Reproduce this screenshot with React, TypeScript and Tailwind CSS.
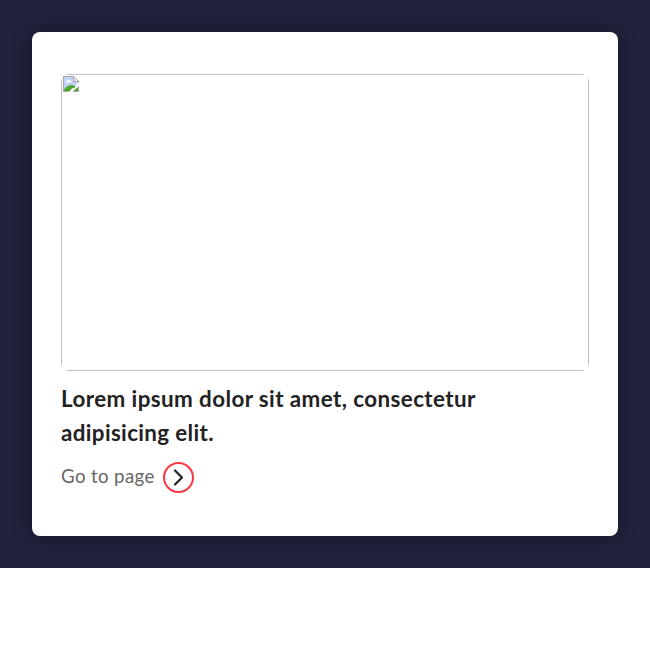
function BrokenImageIcon() {
  return (
    <svg className="block h-4 w-4" viewBox="0 0 16 16" aria-hidden="true">
      <path d="M.5.5h10l5 5v10H.5z" fill="#fff" stroke="#a5a5a5" />
      <path d="M1 1h9.500v4.500H15V15H1z" fill="#c2d4f5" />
      <path d="M3 6.500V5.300l1.300-.5C4.500 3.500 6.500 3.500 7 4.800l1.300.5v1.200z" fill="#fff" />
      <path d="M1 15v-1.500C3 10.500 6 9 8.500 9c2.500 0 4.500 1.500 6.500 4v2z" fill="#4ea72e" />
      <path d="M.5.5h10l5 5v10H.5z" fill="none" stroke="#a5a5a5" />
      <path d="M10.500.5v5h5z" fill="#eee" stroke="#a5a5a5" />
      <path d="M16 7v2.500L9.500 16H6l3-3.500 3-1L14.500 7z" fill="#fff" />
    </svg>
  );
}

function ArrowBadge() {
  return (
    <svg className="block h-[31px] w-[31px]" viewBox="0 0 31 31" fill="none" aria-hidden="true">
      <circle cx="15.500" cy="15.500" r="14.500" stroke="#fb3640" strokeWidth="2" />
      <path d="M12 8.500l7 7-7 7" stroke="#222" strokeWidth="2.200" strokeLinecap="round" strokeLinejoin="round" />
    </svg>
  );
}

export default function App() {
  return (
    <main className="min-h-screen bg-white font-['Lato',sans-serif]">
      <section className="bg-[#20213c] p-8">
        <article className="h-[504px] rounded-lg bg-white px-[29px] pt-[42px] shadow-[0_0_20px_rgba(0,0,0,0.3)]">
          <div className="h-[297px] overflow-hidden rounded-lg">
            <div className="h-full border border-[#c0c0c0] p-px">
              <BrokenImageIcon />
            </div>
          </div>
          <h2 className="mt-[11px] text-[22.4px] leading-[34px] font-bold text-[#222]">
            <span className="block whitespace-nowrap tracking-[0.41px]">Lorem ipsum dolor sit amet, consectetur</span>
            <span className="block whitespace-nowrap tracking-[0.35px]">adipisicing elit.</span>
          </h2>
          <div className="mt-[12px] flex items-start gap-[8px] text-[18.7px] leading-[28px] text-[#666]">
            <span className="w-[94px] whitespace-nowrap tracking-[0.35px]">Go to page</span>
            <ArrowBadge />
          </div>
        </article>
      </section>
    </main>
  );
}
